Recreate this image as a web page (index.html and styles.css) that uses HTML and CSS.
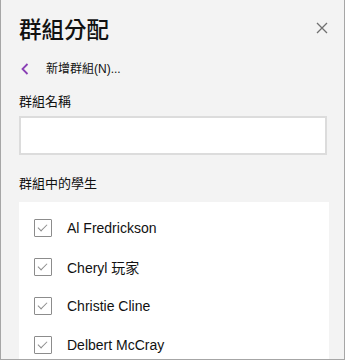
FILE: index.html
```html
<!DOCTYPE html>
<html lang="zh-Hant">
<head>
    <meta charset="UTF-8">
    <meta name="viewport" content="width=device-width, initial-scale=1.0">
    <title>群組分配</title>
    <link rel="stylesheet" href="styles.css">
</head>
<body>
    <div class="panel">
        <div class="header">
            <h1 class="title">群組分配</h1>
            <button class="close" aria-label="關閉">
                <svg width="12" height="12" viewBox="0 0 12 12">
                    <path d="M1 1 L11 11 M11 1 L1 11" stroke="#707070" stroke-width="1.3" fill="none"/>
                </svg>
            </button>
        </div>

        <div class="back-row">
            <svg class="chevron" width="8" height="12" viewBox="0 0 8 12">
                <path d="M6.5 1 L1.5 6 L6.5 11" stroke="#8a3fb5" stroke-width="1.8" fill="none"/>
            </svg>
            <span class="back-text">新增群組(N)...</span>
        </div>

        <label class="label">群組名稱</label>
        <input class="name-input" type="text">

        <div class="label label-students">群組中的學生</div>
        <ul class="student-list">
            <li class="student"><span class="check"></span>Al Fredrickson</li>
            <li class="student"><span class="check"></span>Cheryl 玩家</li>
            <li class="student"><span class="check"></span>Christie Cline</li>
            <li class="student"><span class="check"></span>Delbert McCray</li>
        </ul>
    </div>
</body>
</html>
```

FILE: styles.css
```css
body {
    margin: 0;
    padding: 0;
    font-family: "Liberation Sans", "Noto Sans CJK TC", sans-serif;
    color: #1a1a1a;
}

.panel {
    width: 325px;
    height: 359px;
    background-color: #f3f3f3;
    border: 1px solid #a6a6a6;
    border-top: none;
    padding-left: 18px;
    box-sizing: content-box;
    overflow: hidden;
}

.header {
    display: flex;
    justify-content: space-between;
    align-items: center;
    height: 28px;
    margin-top: 14px;
}

.title {
    margin: 0;
    font-family: "Noto Sans CJK TC", sans-serif;
    font-size: 22.5px;
    font-weight: 500;
    line-height: 28px;
    color: #111;
}

.close {
    background: none;
    border: none;
    padding: 0;
    width: 12px;
    height: 12px;
    margin-right: 16px;
    display: flex;
    cursor: pointer;
}

.back-row {
    display: flex;
    align-items: center;
    height: 20px;
    margin-top: 17px;
    padding-left: 2px;
}

.back-text {
    margin-left: 17px;
    font-size: 12px;
    line-height: 20px;
    color: #111;
}

.label {
    display: block;
    font-family: "Noto Sans CJK TC", sans-serif;
    font-size: 13px;
    line-height: 18px;
    margin-top: 13px;
    color: #111;
}

.name-input {
    display: block;
    box-sizing: border-box;
    width: 308px;
    height: 39px;
    margin-top: 6px;
    border: 2px solid #dcdcdc;
    background-color: #fff;
    outline: none;
}

.label-students {
    margin-top: 19px;
}

.student-list {
    list-style: none;
    margin: 10px 0 0 0;
    padding: 6px 0 0 15px;
    width: 295px;
    background-color: #fff;
}

.student {
    display: flex;
    align-items: center;
    height: 39px;
    font-size: 14px;
    color: #111;
}

.check {
    box-sizing: border-box;
    width: 18px;
    height: 18px;
    margin-right: 15px;
    border: 1.5px solid #8c8c8c;
    border-radius: 1px;
    position: relative;
}

.check::after {
    content: "";
    position: absolute;
    left: 5px;
    top: 2px;
    width: 4px;
    height: 8px;
    border-right: 1.3px solid #8c8c8c;
    border-bottom: 1.3px solid #8c8c8c;
    transform: rotate(45deg);
}
```
